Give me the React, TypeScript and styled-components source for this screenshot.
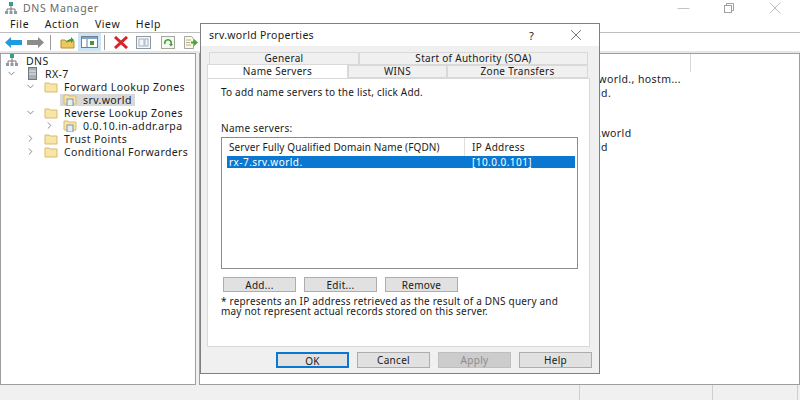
import React from "react";
import styled, { createGlobalStyle } from "styled-components";
import { ChevronDown, ChevronRight, X, Minus } from "lucide-react";

const GlobalStyle = createGlobalStyle`
  html, body {
    margin: 0;
    padding: 0;
    background: #ffffff;
  }
  * {
    box-sizing: border-box;
  }
`;

const Desktop = styled.div`
  position: relative;
  width: 800px;
  height: 400px;
  overflow: hidden;
  display: flex;
  flex-direction: column;
  background: #ffffff;
  color: #1a1a1a;
  font-family: "Noto Sans", "Open Sans", sans-serif;
  font-size: 10px;
  letter-spacing: 0.3px;
`;

const TitleBar = styled.div`
  height: 16px;
  flex: none;
  display: flex;
  align-items: center;
  padding: 0 2px 0 5px;
  gap: 6px;
  color: #6a6a6a;
  font-size: 10.5px;
  letter-spacing: 0.65px;
`;

const WindowControls = styled.div`
  margin-left: auto;
  display: flex;
  align-items: center;
  color: #a0a0a0;
`;

const ControlSlot = styled.span`
  width: 46px;
  display: flex;
  justify-content: center;
`;

const MenuBar = styled.div`
  height: 17px;
  flex: none;
  display: flex;
  align-items: center;
  padding-left: 10px;
  gap: 15.5px;
  border-bottom: 1px solid #bdbdbd;
  font-size: 10.5px;
  letter-spacing: 0.6px;
`;

const Toolbar = styled.div`
  height: 20px;
  flex: none;
  display: flex;
  align-items: center;
  padding-left: 2px;
  border-bottom: 2px solid #e6e6e6;
`;

const ToolButton = styled.span<{ $active?: boolean; $width?: number }>`
  width: ${({ $width }) => $width ?? 22}px;
  height: 18px;
  flex: none;
  display: flex;
  align-items: center;
  justify-content: center;
  background: ${({ $active }) => ($active ? "#cde4f5" : "transparent")};
`;

const ToolSeparator = styled.span<{ $before: number; $after: number }>`
  width: 1px;
  height: 15px;
  flex: none;
  margin: 0 ${({ $after }) => $after}px 0 ${({ $before }) => $before}px;
  background: #9a9a9a;
`;

const Panes = styled.div`
  height: 332px;
  flex: none;
  display: flex;
  gap: 3px;
  background: #f0f0f0;
`;

const TreePane = styled.div`
  width: 196px;
  flex: none;
  background: #ffffff;
  border: 1px solid #9e9e9e;
  font-size: 10.5px;
  letter-spacing: 0.4px;
`;

const TreeRow = styled.div<{ $indent: number }>`
  height: 13px;
  display: flex;
  align-items: center;
  padding-left: ${({ $indent }) => $indent}px;
  white-space: nowrap;
`;

const Twisty = styled.span`
  width: 20px;
  flex: none;
  display: flex;
  padding-left: 1px;
  color: #555555;
`;

const NodeIcon = styled.span`
  width: 20px;
  flex: none;
  display: flex;
  align-items: center;
`;

const SelectedNode = styled.span`
  display: flex;
  align-items: center;
  height: 12px;
  padding: 0 3px;
  margin-left: -3px;
  background: #d9d9d9;
`;

const DetailPane = styled.div`
  flex: 1;
  background: #ffffff;
  border: 1px solid #9e9e9e;
`;

const DetailHeader = styled.div`
  height: 18px;
  width: 491px;
  border-right: 1px solid #d8d8d8;
`;

const DetailRow = styled.div<{ $gapAbove?: number }>`
  height: 14px;
  margin-top: ${({ $gapAbove }) => $gapAbove ?? 0}px;
  padding-left: 335px;
  font-size: 10.5px;
  letter-spacing: 0.4px;
  white-space: nowrap;
`;

const StatusBar = styled.div`
  flex: 1;
  display: flex;
  background: #f0f0f0;
`;

const StatusCell = styled.span<{ $width: number }>`
  width: ${({ $width }) => $width}px;
  flex: none;
  border-right: 1px solid #cfcfcf;
`;

const Dialog = styled.div`
  position: absolute;
  left: 200px;
  top: 23px;
  width: 400px;
  height: 351px;
  display: flex;
  flex-direction: column;
  background: #f0f0f0;
  border: 1px solid #808080;
`;

const DialogTitle = styled.div`
  height: 22px;
  flex: none;
  display: flex;
  align-items: center;
  padding-left: 8px;
  background: #ffffff;
  font-size: 10.5px;
`;

const HelpMark = styled.span`
  margin-left: auto;
  margin-right: 19px;
  font-size: 11px;
`;

const DialogClose = styled.span`
  width: 46px;
  display: flex;
  justify-content: center;
  color: #333333;
`;

const TabRows = styled.div`
  padding: 6px 0 0 6px;
  flex: none;
`;

const TabRow = styled.div<{ $inset: number }>`
  display: flex;
  padding-left: ${({ $inset }) => $inset}px;
  height: 13px;
  align-items: flex-end;
`;

const Tab = styled.div<{ $width: number; $active?: boolean }>`
  width: ${({ $width }) => $width}px;
  height: ${({ $active }) => ($active ? 14 : 13)}px;
  flex: none;
  display: flex;
  align-items: center;
  justify-content: center;
  padding-bottom: ${({ $active }) => ($active ? 2 : 1)}px;
  background: ${({ $active }) => ($active ? "#ffffff" : "#f0f0f0")};
  border: 1px solid #d9d9d9;
  border-bottom: ${({ $active }) => ($active ? "none" : "1px solid #d9d9d9")};
  position: relative;
  z-index: ${({ $active }) => ($active ? 1 : 0)};
`;

const TabPanel = styled.div`
  width: 383px;
  height: 269px;
  margin-left: 6px;
  flex: none;
  padding: 7px 12px 0 13px;
  background: #ffffff;
  border: 1px solid #d9d9d9;
`;

const Hint = styled.div`
  height: 13px;
  line-height: 13px;
  letter-spacing: 0.2px;
`;

const ListLabel = styled.div`
  margin-top: 23px;
  height: 13px;
  line-height: 13px;
`;

const ListBox = styled.div`
  width: 357px;
  height: 132px;
  margin-top: 2px;
  padding: 0 2px 0 5px;
  border: 1px solid #8c8c8c;
`;

const ListHeader = styled.div`
  height: 18px;
  display: flex;
  align-items: center;
`;

const ListRow = styled.div`
  height: 12px;
  display: flex;
  align-items: center;
  background: #0a78d0;
  color: #ffffff;
  letter-spacing: 0.45px;
`;

const NameColumn = styled.span`
  width: 238px;
  flex: none;
  padding-left: 2px;
  height: 100%;
  display: flex;
  align-items: center;
`;

const HeaderDivider = styled(NameColumn)`
  border-right: 1px solid #dedede;
  letter-spacing: 0.1px;
`;

const AddressColumn = styled.span`
  padding-left: 7px;
`;

const ButtonRow = styled.div<{ $align?: string }>`
  display: flex;
  gap: 8px;
  justify-content: ${({ $align }) => $align ?? "flex-start"};
`;

const PanelButtons = styled(ButtonRow)`
  margin-top: 8px;
  padding-left: 2px;
`;

const FooterButtons = styled(ButtonRow)`
  margin-top: 5px;
  padding-right: 7px;

  button {
    height: 16px;
  }
`;

const DialogButton = styled.button<{ $primary?: boolean }>`
  width: 73px;
  height: 15px;
  padding: 0;
  font: inherit;
  letter-spacing: inherit;
  color: #1a1a1a;
  background: #e1e1e1;
  border: ${({ $primary }) => ($primary ? "2px solid #0a78d0" : "1px solid #adadad")};
  &:disabled {
    color: #8c8c8c;
    background: #cccccc;
    border-color: #bfbfbf;
  }
`;

const Note = styled.div`
  margin-top: 4px;
  line-height: 10px;
  letter-spacing: 0.2px;
`;

const FolderIcon = () => (
  <svg width="14" height="12" viewBox="0 0 14 12">
    <path d="M1 2h4l1 1h7v8H1z" fill="#f8e6a8" stroke="#d9bb6a" strokeWidth="1" />
  </svg>
);

const ZoneIcon = () => (
  <svg width="14" height="13" viewBox="0 0 14 13">
    <path d="M1 2h4l1 1h7v8H1z" fill="#f8e6a8" stroke="#d9bb6a" strokeWidth="1" />
    <rect x="4" y="6" width="6" height="7" fill="#e4eef6" stroke="#7d93a8" strokeWidth="1" />
  </svg>
);

const DnsIcon = () => (
  <svg width="12" height="13" viewBox="0 0 12 13">
    <rect x="4" y="0" width="4" height="4" fill="#3f9a8c" />
    <path d="M6 4v3M2 9V7h8v2M6 7v2" stroke="#777777" fill="none" />
    <rect x="0" y="9" width="3" height="3" fill="#8c9aa6" />
    <rect x="4.5" y="9" width="3" height="3" fill="#8c9aa6" />
    <rect x="9" y="9" width="3" height="3" fill="#8c9aa6" />
  </svg>
);

const ServerIcon = () => (
  <svg width="12" height="13" viewBox="0 0 12 13">
    <rect x="3.5" y="0.5" width="8" height="12" fill="#a9b0b5" stroke="#70787e" />
    <path d="M4 4h7M4 7h7" stroke="#e6e9eb" />
  </svg>
);

const RestoreIcon = () => (
  <svg width="10" height="10" viewBox="0 0 10 10" fill="none" stroke="currentColor">
    <rect x="0.5" y="2.5" width="7" height="7" />
    <path d="M2.5 2.5v-2h7v7h-2" />
  </svg>
);

const BackIcon = () => (
  <svg width="17" height="11" viewBox="0 0 17 11">
    <path d="M0 5.5 6 0v3h11v5H6v3z" fill="#1f9be0" />
  </svg>
);

const ForwardIcon = () => (
  <svg width="17" height="11" viewBox="0 0 17 11">
    <path d="M17 5.5 11 0v3H0v5h11v3z" fill="#8c8c8c" />
  </svg>
);

const FolderUpIcon = () => (
  <svg width="15" height="13" viewBox="0 0 15 13">
    <path d="M1 4h4l1 1h8v7H1z" fill="#eec75f" stroke="#b98f30" />
    <path d="M6 7c1-3 3-4 5-4V1l3 3-3 3V5c-2 0-3 1-5 2z" fill="#3f9a3c" />
  </svg>
);

const ConsoleTreeIcon = () => (
  <svg width="17" height="12" viewBox="0 0 17 12">
    <rect x="0.5" y="0.5" width="16" height="11" fill="#ffffff" stroke="#6f7f8c" />
    <rect x="1" y="1" width="15" height="2" fill="#7fa5c4" />
    <path d="M6 3v8" stroke="#6f7f8c" />
    <rect x="9" y="5" width="4" height="4" fill="#3f9a3c" />
  </svg>
);

const DeleteIcon = () => (
  <svg width="16" height="13" viewBox="0 0 16 13">
    <path d="M2 1l12 11M14 1 2 12" stroke="#d8232a" strokeWidth="3" />
  </svg>
);

const PropertiesIcon = () => (
  <svg width="15" height="13" viewBox="0 0 15 13">
    <rect x="0.5" y="0.5" width="14" height="12" fill="#f4f7fa" stroke="#8c9aa6" />
    <rect x="3" y="3" width="5" height="7" fill="none" stroke="#a6b2bd" />
    <rect x="9" y="3" width="3" height="7" fill="none" stroke="#a6b2bd" />
  </svg>
);

const RefreshIcon = () => (
  <svg width="14" height="13" viewBox="0 0 14 13">
    <rect x="0.5" y="0.5" width="13" height="12" fill="#f7f7f2" stroke="#a3a89c" />
    <path d="M4 8a3.2 3.2 0 1 1 6 0" fill="none" stroke="#3f9a3c" strokeWidth="1.6" />
    <path d="M8 8h4l-2 2.5z" fill="#3f9a3c" />
  </svg>
);

const ExportIcon = () => (
  <svg width="15" height="13" viewBox="0 0 15 13">
    <path d="M1.5 0.5h7l2 2v10h-9z" fill="#fbf8e6" stroke="#a3a89c" />
    <path d="M3 4h5M3 6.500h4M3 9h5" stroke="#b8b08a" />
    <path d="M8 5.500h3V3l4 3.500-4 3.500V7.500H8z" fill="#4aa53f" />
  </svg>
);

const TREE = [
  { label: "DNS", indent: 5, icon: <DnsIcon /> },
  { label: "RX-7", indent: 4, twisty: "open", icon: <ServerIcon /> },
  { label: "Forward Lookup Zones", indent: 23, twisty: "open", icon: <FolderIcon /> },
  { label: "srv.world", indent: 62, icon: <ZoneIcon />, selected: true },
  { label: "Reverse Lookup Zones", indent: 23, twisty: "open", icon: <FolderIcon /> },
  { label: "0.0.10.in-addr.arpa", indent: 42, twisty: "closed", icon: <ZoneIcon /> },
  { label: "Trust Points", indent: 23, twisty: "closed", icon: <FolderIcon /> },
  { label: "Conditional Forwarders", indent: 23, twisty: "closed", icon: <FolderIcon /> },
];

const App: React.FC = () => {
  return (
    <Desktop>
      <GlobalStyle />
      <TitleBar>
        <DnsIcon />
        DNS Manager
        <WindowControls>
          <ControlSlot>
            <Minus size={19} strokeWidth={0.8} />
          </ControlSlot>
          <ControlSlot>
            <RestoreIcon />
          </ControlSlot>
          <ControlSlot>
            <X size={20} strokeWidth={0.8} />
          </ControlSlot>
        </WindowControls>
      </TitleBar>
      <MenuBar>
        <span>File</span>
        <span>Action</span>
        <span>View</span>
        <span>Help</span>
      </MenuBar>
      <Toolbar>
        <ToolButton>
          <BackIcon />
        </ToolButton>
        <ToolButton>
          <ForwardIcon />
        </ToolButton>
        <ToolSeparator $before={4} $after={5} />
        <ToolButton>
          <FolderUpIcon />
        </ToolButton>
        <ToolButton $active $width={23}>
          <ConsoleTreeIcon />
        </ToolButton>
        <ToolSeparator $before={3} $after={5} />
        <ToolButton>
          <DeleteIcon />
        </ToolButton>
        <ToolButton>
          <PropertiesIcon />
        </ToolButton>
        <ToolButton $width={28}>
          <RefreshIcon />
        </ToolButton>
        <ToolButton $width={16}>
          <ExportIcon />
        </ToolButton>
      </Toolbar>
      <Panes>
        <TreePane>
          {TREE.map((node) => {
            const content = (
              <>
                <NodeIcon>{node.icon}</NodeIcon>
                <span>{node.label}</span>
              </>
            );
            return (
              <TreeRow key={node.label} $indent={node.indent}>
                {node.twisty === "open" && (
                  <Twisty>
                    <ChevronDown size={11} strokeWidth={1.5} />
                  </Twisty>
                )}
                {node.twisty === "closed" && (
                  <Twisty>
                    <ChevronRight size={11} strokeWidth={1.5} />
                  </Twisty>
                )}
                {node.selected ? <SelectedNode>{content}</SelectedNode> : content}
              </TreeRow>
            );
          })}
        </TreePane>
        <DetailPane>
          <DetailHeader />
          <DetailRow>[5], rx-7.srv.world., hostm...</DetailRow>
          <DetailRow>rx-7.srv.world.</DetailRow>
          <DetailRow>10.0.0.101</DetailRow>
          <DetailRow $gapAbove={12}>[10] rx-7.srv.world</DetailRow>
          <DetailRow>rx-7.srv.world</DetailRow>
        </DetailPane>
      </Panes>
      <StatusBar>
        <StatusCell $width={580} />
        <StatusCell $width={133} />
        <StatusCell $width={85} />
      </StatusBar>
      <Dialog>
        <DialogTitle>
          srv.world Properties
          <HelpMark>?</HelpMark>
          <DialogClose>
            <X size={18} strokeWidth={0.9} />
          </DialogClose>
        </DialogTitle>
        <TabRows>
          <TabRow $inset={2}>
            <Tab $width={150}>General</Tab>
            <Tab $width={229}>Start of Authority (SOA)</Tab>
          </TabRow>
          <TabRow $inset={0}>
            <Tab $width={141} $active>
              Name Servers
            </Tab>
            <Tab $width={99}>WINS</Tab>
            <Tab $width={141}>Zone Transfers</Tab>
          </TabRow>
        </TabRows>
        <TabPanel>
          <Hint>To add name servers to the list, click Add.</Hint>
          <ListLabel>Name servers:</ListLabel>
          <ListBox>
            <ListHeader>
              <HeaderDivider>Server Fully Qualified Domain Name (FQDN)</HeaderDivider>
              <AddressColumn>IP Address</AddressColumn>
            </ListHeader>
            <ListRow>
              <NameColumn>rx-7.srv.world.</NameColumn>
              <AddressColumn>[10.0.0.101]</AddressColumn>
            </ListRow>
          </ListBox>
          <PanelButtons>
            <DialogButton>Add...</DialogButton>
            <DialogButton>Edit...</DialogButton>
            <DialogButton>Remove</DialogButton>
          </PanelButtons>
          <Note>
            * represents an IP address retrieved as the result of a DNS query and
            <br />
            may not represent actual records stored on this server.
          </Note>
        </TabPanel>
        <FooterButtons $align="flex-end">
          <DialogButton $primary>OK</DialogButton>
          <DialogButton>Cancel</DialogButton>
          <DialogButton disabled>Apply</DialogButton>
          <DialogButton>Help</DialogButton>
        </FooterButtons>
      </Dialog>
    </Desktop>
  );
};

export default App;
